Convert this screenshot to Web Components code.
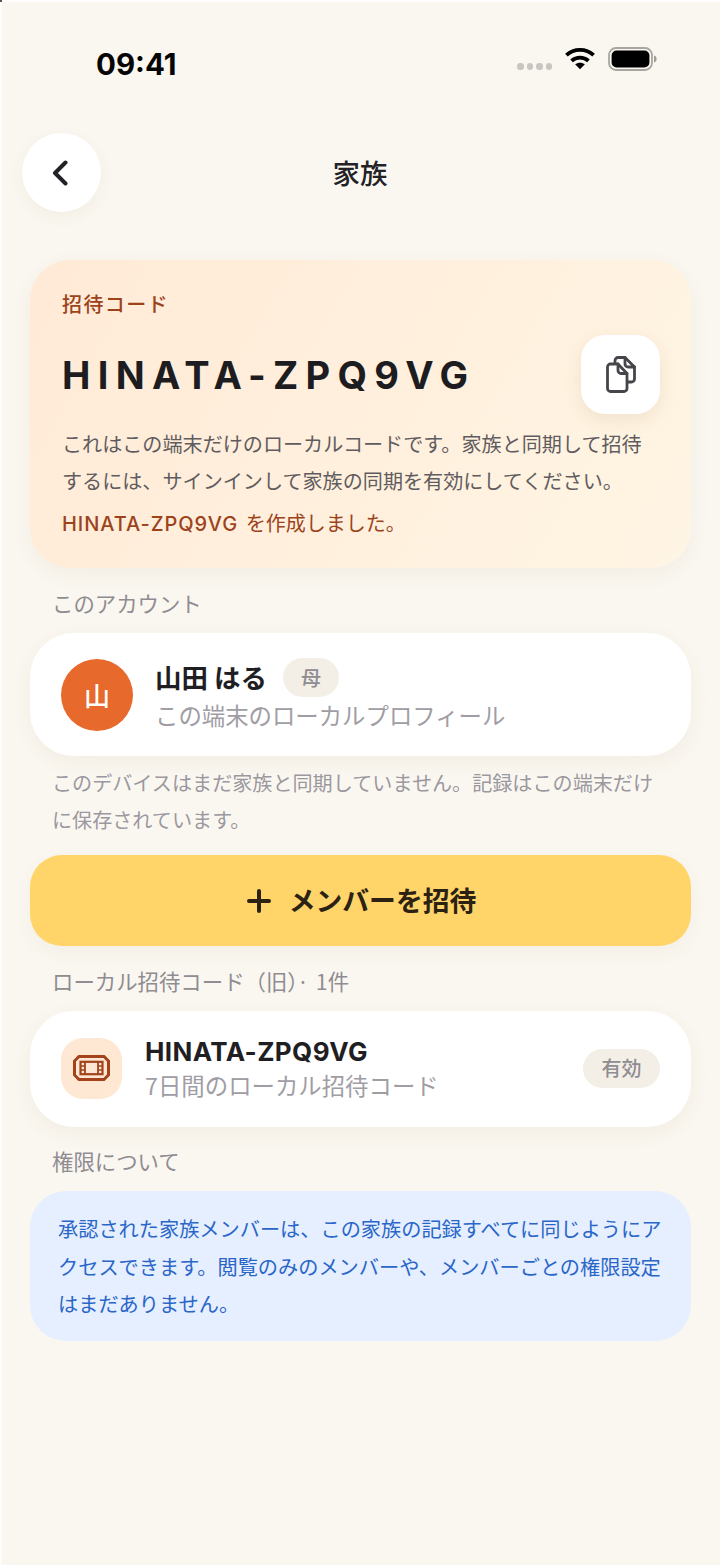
<!DOCTYPE html>
<html lang="ja">
<head>
<meta charset="utf-8">
<title>家族</title>
<style>
  html, body { margin: 0; padding: 0; background: #faf7f0; }
  body { font-family: Inter, "Noto Sans CJK JP", sans-serif; }
</style>
</head>
<body>
<family-screen>
  <status-bar time="09:41"></status-bar>
  <nav-header title="家族"></nav-header>
  <invite-card code="HINATA-ZPQ9VG" label="招待コード">
    <span slot="desc">これはこの端末だけのローカルコードです。家族と同期して招待するには、サインインして家族の同期を有効にしてください。</span>
    <span slot="status" style="word-spacing:2px"><span style="letter-spacing:.95px;font-weight:500">HINATA-ZPQ9VG</span> を作成しました。</span>
  </invite-card>
  <section-label>このアカウント</section-label>
  <account-card name="山田 はる" role="母" initial="山" sub="この端末のローカルプロフィール"></account-card>
  <note-text>このデバイスはまだ家族と同期していません。記録はこの端末だけに保存されています。</note-text>
  <primary-button>メンバーを招待</primary-button>
  <section-label>ローカル招待コード（旧<span style="letter-spacing:-1px">）</span><span style="word-spacing:2px">· 1件</span></section-label>
  <code-row code="HINATA-ZPQ9VG" sub="7日間のローカル招待コード" state="有効"></code-row>
  <section-label style="--top:17px">権限について</section-label>
  <info-note>承認された家族メンバーは、この家族の記録すべてに同じようにアクセスできます。閲覧のみのメンバーや、メンバーごとの権限設定はまだありません。</info-note>
</family-screen>

<script>
// tiny helper so each element only declares its markup
function shadow(el, html) {
  el.attachShadow({ mode: 'open' }).innerHTML = html;
}

class FamilyScreen extends HTMLElement {
  constructor() {
    super();
    // the layered strips are the pale top and left edge of the screenshot
    shadow(this, `
      <style>
        :host { display: block; width: 720px; height: 1565px; box-sizing: border-box; padding: 0 29px 0 30px; overflow: hidden;
                background:
                  linear-gradient(#555, #555) 0 0 / 2px 2px no-repeat,
                  linear-gradient(#fefdfb, #fefdfb) 0 0 / 100% 2px no-repeat,
                  linear-gradient(#fefdfb, #fefdfb) 0 0 / 2px 100% no-repeat,
                  #faf7f0; }
        .wrap { display: flex; flex-direction: column; }
      </style>
      <div class="wrap"><slot></slot></div>`);
  }
}

class StatusBar extends HTMLElement {
  constructor() {
    super();
    shadow(this, `
      <style>
        :host { display: block; height: 133px; margin: 0 -29px 0 -30px; }
        .bar { display: flex; align-items: flex-start; padding: 47px 63px 0 96px; }
        .time { font: 700 29.5px/34px Inter, sans-serif; color: #050505; flex: 1; }
        .icons { display: flex; align-items: flex-start; }
        .dots { display: flex; gap: 3px; margin: 16px 13px 0 0; }
        .dots i { width: 6.5px; height: 6.5px; border-radius: 50%; background: #c9c6c2; }
        svg { display: block; }
      </style>
      <div class="bar">
        <span class="time"></span>
        <div class="icons">
          <div class="dots"><i></i><i></i><i></i><i></i></div>
          <svg width="30" height="23" viewBox="0 0 32 24" style="margin:0 13px 0 0">
            <path d="M1.500 8.500C9.500 1 22.500 1 30.500 8.500" fill="none" stroke="#000" stroke-width="4"/>
            <path d="M7 14.500C12 10 20 10 25 14.500" fill="none" stroke="#000" stroke-width="4"/>
            <path d="M10.800 18.200C13.500 15.800 18.500 15.800 21.200 18.200L16 23.500Z" fill="#000"/>
          </svg>
          <svg width="49" height="24" viewBox="0 0 49 24">
            <rect x="1" y="1" width="43" height="22" rx="7" fill="none" stroke="#a9a6a1" stroke-width="1.800"/>
            <rect x="3.600" y="3.600" width="37.800" height="16.800" rx="5" fill="#000"/>
            <path d="M46 8.500c1.700.5 2.600 1.900 2.600 3.500s-.9 3-2.600 3.500z" fill="#a09d98"/>
          </svg>
        </div>
      </div>`);
    this.shadowRoot.querySelector('.time').textContent = this.getAttribute('time');
  }
}

class NavHeader extends HTMLElement {
  constructor() {
    super();
    shadow(this, `
      <style>
        :host { display: block; height: 127px; margin: 0 -29px 0 -30px; }
        .row { position: relative; display: flex; justify-content: center; height: 79px; align-items: center; }
        .back { position: absolute; left: 22px; top: 0; width: 79px; height: 79px; border-radius: 50%; background: #fff;
                box-shadow: 0 5px 16px rgba(90,70,40,.05); display: flex; align-items: center; justify-content: center; }
        .back svg { margin-right: 4px; }
        h1 { margin: 0 0 2px; font: 500 27.5px/40px "Noto Sans CJK JP", sans-serif; color: #232226; }
      </style>
      <div class="row">
        <div class="back">
          <svg width="17" height="26" viewBox="0 0 17 26"><path d="M14.500 2.500 4 13l10.500 10.500" fill="none" stroke="#232226" stroke-width="4" stroke-linecap="round" stroke-linejoin="round"/></svg>
        </div>
        <h1></h1>
      </div>`);
    this.shadowRoot.querySelector('h1').textContent = this.getAttribute('title');
  }
}

class InviteCard extends HTMLElement {
  constructor() {
    super();
    shadow(this, `
      <style>
        :host { display: block; border-radius: 40px; background: linear-gradient(120deg, #ffead7 0%, #fff0dd 55%, #fff5e4 100%);
                box-shadow: 0 6px 20px rgba(120,90,50,.06); padding: 29px 31px 29px 32px; height: 308px; box-sizing: border-box; }
        .label { font: 500 20px/30px "Noto Sans CJK JP", sans-serif; letter-spacing: 1.4px; color: #9c431b; }
        .top { display: flex; align-items: center; justify-content: space-between; margin-top: 16px; }
        .code { font: 700 38px/46px Inter, sans-serif; letter-spacing: 7.3px; color: #1d1c21; }
        .copy { width: 79px; height: 79px; border-radius: 24px; background: #fff; box-shadow: 0 6px 18px rgba(120,90,50,.10);
                display: flex; align-items: center; justify-content: center; }
        .desc { margin-top: 11px; padding-right: 14px; font: 400 20.1px/37px "Noto Sans CJK JP", sans-serif; color: #5f5c60; }
        .status { margin-top: 7px; font: 400 20px/37px Inter, "Noto Sans CJK JP", sans-serif; color: #9c431b; }
      </style>
      <div class="label"></div>
      <div class="top">
        <div class="code"></div>
        <div class="copy">
          <svg width="30" height="37" viewBox="0 0 30 37" fill="none" stroke="#47454b" stroke-width="2.800" stroke-linejoin="round" stroke-linecap="round">
            <path d="M9 7V4.500a3 3 0 0 1 3-3h7L28.500 11v12a3 3 0 0 1-3 3H22"/>
            <path d="M19 1.500V8a3 3 0 0 0 3 3h6.500"/>
            <path d="M4.500 8H12l9 9.500V32.500a3 3 0 0 1-3 3H4.500a3 3 0 0 1-3-3V11a3 3 0 0 1 3-3Z" fill="#fff"/>
            <path d="M12 8v6.500a3 3 0 0 0 3 3h6"/>
          </svg>
        </div>
      </div>
      <div class="desc"><slot name="desc"></slot></div>
      <div class="status"><slot name="status"></slot></div>`);
    this.shadowRoot.querySelector('.label').textContent = this.getAttribute('label');
    this.shadowRoot.querySelector('.code').textContent = this.getAttribute('code');
  }
}

class SectionLabel extends HTMLElement {
  constructor() {
    super();
    shadow(this, `
      <style>
        :host { display: block; padding: var(--top, 18px) 22px 0; font: 400 21.4px/34px "Noto Sans CJK JP", sans-serif; color: #8f8c92; height: 34px; margin-bottom: 13px; }
      </style>
      <slot></slot>`);
  }
}

class AccountCard extends HTMLElement {
  constructor() {
    super();
    shadow(this, `
      <style>
        :host { display: flex; align-items: center; height: 123px; box-sizing: border-box; padding: 0 31px; border-radius: 44px; background: #fff;
                box-shadow: 0 6px 20px rgba(120,90,50,.06); }
        .avatar { width: 72px; height: 72px; border-radius: 50%; background: #e8692c; color: #fff; display: flex; align-items: center; justify-content: center;
                  font: 500 26px/1 "Noto Sans CJK JP", sans-serif; flex: none; }
        .text { margin-left: 22px; }
        .line { display: flex; align-items: center; }
        .name { font: 600 26.5px/38px "Noto Sans CJK JP", sans-serif; color: #1f1e23; }
        .role { margin: 2px 0 0 16px; width: 56px; height: 39px; border-radius: 20px; background: #f3efe7; color: #8f8c92; display: flex; align-items: center; justify-content: center;
                font: 500 20px/1 "Noto Sans CJK JP", sans-serif; }
        .sub { font: 400 23.4px/36px "Noto Sans CJK JP", sans-serif; color: #a09da4; }
      </style>
      <div class="avatar"></div>
      <div class="text">
        <div class="line"><span class="name"></span><span class="role"></span></div>
        <div class="sub"></div>
      </div>`);
    const $ = s => this.shadowRoot.querySelector(s);
    $('.avatar').textContent = this.getAttribute('initial');
    $('.name').textContent = this.getAttribute('name');
    $('.role').textContent = this.getAttribute('role');
    $('.sub').textContent = this.getAttribute('sub');
  }
}

class NoteText extends HTMLElement {
  constructor() {
    super();
    shadow(this, `
      <style>
        :host { display: block; padding: 8px 22px 0 22px; font: 400 20.1px/37px "Noto Sans CJK JP", sans-serif; color: #9b98a0; }
      </style>
      <slot></slot>`);
  }
}

class PrimaryButton extends HTMLElement {
  constructor() {
    super();
    shadow(this, `
      <style>
        :host { display: flex; align-items: center; justify-content: center; gap: 18px; height: 91px; box-sizing: border-box; padding-left: 2px; margin-top: 17px; border-radius: 32px; background: #ffd469;
                font: 600 26.8px/1 "Noto Sans CJK JP", sans-serif; color: #2b2213; box-shadow: 0 6px 18px rgba(120,90,50,.05); }
      </style>
      <svg width="24" height="24" viewBox="0 0 24 24" fill="none" stroke="#2b2213" stroke-width="4" stroke-linecap="round"><path d="M12 2v20M2 12h20"/></svg>
      <slot></slot>`);
  }
}

class CodeRow extends HTMLElement {
  constructor() {
    super();
    shadow(this, `
      <style>
        :host { display: flex; align-items: center; height: 116px; box-sizing: border-box; padding: 0 31px 2px; border-radius: 44px; background: #fff;
                box-shadow: 0 6px 20px rgba(120,90,50,.06); }
        .tile { width: 61px; height: 61px; border-radius: 22px; background: #ffe8d3; display: flex; align-items: center; justify-content: center; flex: none; }
        .text { margin-left: 23px; flex: 1; }
        .code { font: 700 26px/34px Inter, sans-serif; letter-spacing: .4px; color: #1f1e23; }
        .sub { font: 400 23.4px/32px "Noto Sans CJK JP", Inter, sans-serif; color: #a09da4; }
        .state { width: 77px; height: 39px; border-radius: 20px; background: #f3efe7; color: #8f8c92; display: flex; align-items: center; justify-content: center;
                 font: 500 20px/1 "Noto Sans CJK JP", sans-serif; }
      </style>
      <div class="tile">
        <svg width="37" height="26" viewBox="0 0 37 26" fill="none" stroke="#a3421b" stroke-width="3" stroke-linejoin="miter">
          <path d="M6 1.500H31L35.500 6V20L31 24.500H6L1.500 20V6Z"/>
          <rect x="7.500" y="6.800" width="22" height="12.400" stroke-width="2.200"/>
          <path d="M12 6.800V19.200M25 6.800V19.200" stroke-width="1.800"/>
          <path d="M7.500 11H12M7.500 15H12M25 11H29.500M25 15H29.500" stroke-width="1.600"/>
        </svg>
      </div>
      <div class="text"><div class="code"></div><div class="sub"></div></div>
      <div class="state"></div>`);
    const $ = s => this.shadowRoot.querySelector(s);
    $('.code').textContent = this.getAttribute('code');
    $('.sub').textContent = this.getAttribute('sub');
    $('.state').textContent = this.getAttribute('state');
  }
}

class InfoNote extends HTMLElement {
  constructor() {
    super();
    shadow(this, `
      <style>
        :host { display: block; box-sizing: border-box; height: 150px; padding: 19px 29px 0 28px; border-radius: 36px; background: #e5efff;
                font: 400 20.2px/37.5px "Noto Sans CJK JP", sans-serif; color: #2a66c8; }
      </style>
      <slot></slot>`);
  }
}

customElements.define('family-screen', FamilyScreen);
customElements.define('status-bar', StatusBar);
customElements.define('nav-header', NavHeader);
customElements.define('invite-card', InviteCard);
customElements.define('section-label', SectionLabel);
customElements.define('account-card', AccountCard);
customElements.define('note-text', NoteText);
customElements.define('primary-button', PrimaryButton);
customElements.define('code-row', CodeRow);
customElements.define('info-note', InfoNote);
</script>
</body>
</html>
